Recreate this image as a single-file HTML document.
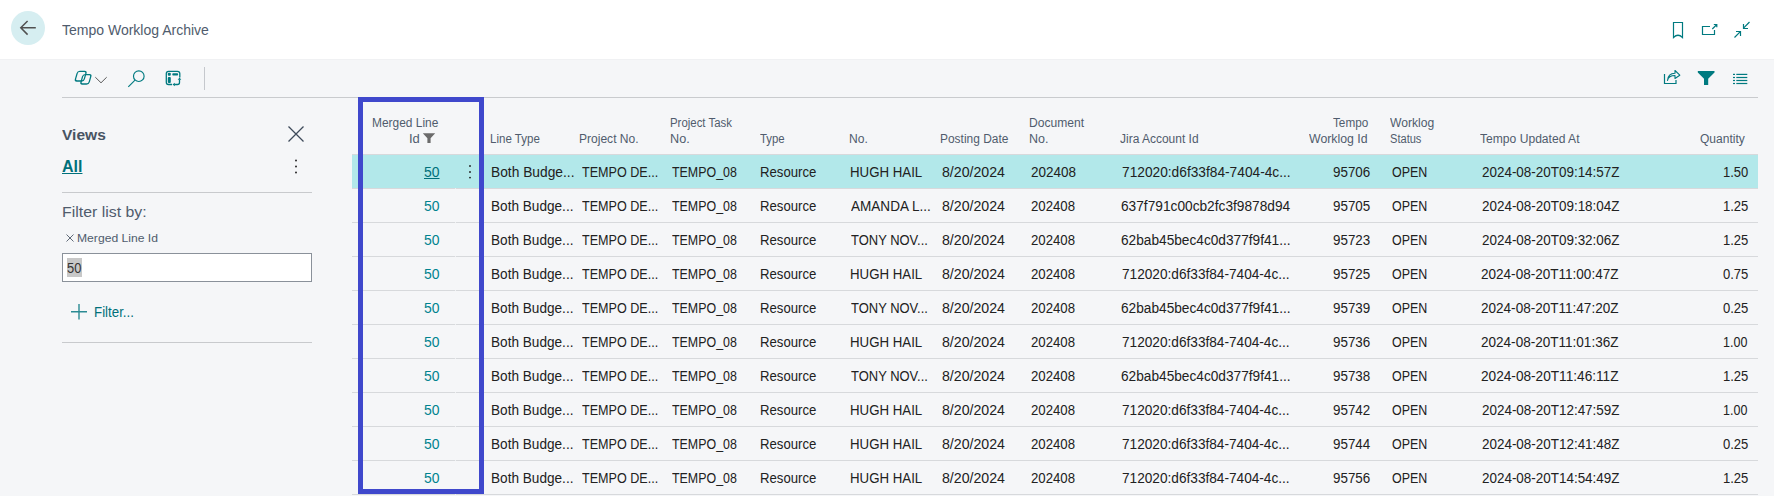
<!DOCTYPE html>
<html><head><meta charset="utf-8"><style>
*{box-sizing:border-box}
html,body{margin:0;padding:0}
body{width:1774px;height:496px;overflow:hidden;position:relative;background:#f5f6f8;font-family:"Liberation Sans",sans-serif}
.t{position:absolute;white-space:pre;transform-origin:0 0}
.hdr{position:absolute;left:0;top:0;width:1774px;height:59px;background:#fff;box-shadow:0 1px 1px rgba(0,0,0,0.02)}
.hl{position:absolute;left:352px;width:1406px;height:1px;background:#d7d9dc}
svg{position:absolute;overflow:visible}
</style></head><body>
<div class="hdr"></div>
<div style="position:absolute;left:11px;top:11px;width:34px;height:34px;border-radius:50%;background:#d6eef1"></div>
<svg style="left:0;top:0" width="60" height="60"><path d="M27.6 21 L20.8 27.8 L27.6 34.6 M21 27.8 H35.8" fill="none" stroke="#505050" stroke-width="1.5"/></svg>

<!-- header right icons -->
<svg style="left:0;top:0" width="1774" height="60">
 <path d="M1673.5 22.5 H1682.5 V37.5 Q1678 33 1673.5 37.5 Z" fill="none" stroke="#007a80" stroke-width="1.2" stroke-linejoin="miter"/>
 <path d="M1710 26.5 H1702.5 V34.5 H1714.5 V30" fill="none" stroke="#007a80" stroke-width="1.2"/>
 <path d="M1712.3 29 L1716.8 24.5 M1713.8 24.5 H1716.8 V27.3" fill="none" stroke="#007a80" stroke-width="1.2"/>
 <path d="M1749.5 22 L1743.8 27.8 M1743.5 24 V28.5 H1748" fill="none" stroke="#007a80" stroke-width="1.2"/>
 <path d="M1734.5 37.5 L1740.3 31.7 M1736 31.5 H1740.5 V36" fill="none" stroke="#007a80" stroke-width="1.2"/>
</svg>

<!-- toolbar -->
<svg style="left:0;top:0" width="1774" height="100">
 <g fill="none" stroke="#007a80" stroke-width="1.3">
  <rect x="-4.4" y="-4.8" width="8.8" height="9.6" rx="2" transform="translate(80.7,76.2) skewX(-16)"/>
  <rect x="-4.1" y="-4.7" width="8.2" height="9.4" rx="2" transform="translate(85.9,79.3) skewX(-16)"/>
 </g>
 <path d="M95.3 77.2 L101 82.8 L106.7 77.2" fill="none" stroke="#5a5a5a" stroke-width="1"/>
 <circle cx="138.8" cy="76.2" r="5.3" fill="none" stroke="#007a80" stroke-width="1.15"/>
 <path d="M135 80.2 L128.3 86.8" stroke="#007a80" stroke-width="1.15"/>
 <path d="M172 84.5 H168.5 Q166.3 84.5 166.3 82.3 V73.6 Q166.3 71.3 168.5 71.3 H177.5 Q179.8 71.3 179.8 73.6 V77.5" fill="none" stroke="#007a80" stroke-width="1.3"/>
 <rect x="167.8" y="72.8" width="3" height="3" rx="1" fill="#007a80"/>
 <rect x="172.3" y="73.2" width="5.8" height="2.4" rx="0.8" fill="#007a80"/>
 <rect x="167.8" y="77" width="3" height="6" rx="1" fill="#007a80"/>
 <path d="M179.5 79.5 V82.5 Q179.5 84.5 177.5 84.5 H174.5" fill="none" stroke="#007a80" stroke-width="1.3"/>
 <path d="M177.7 79.8 L179.5 77.5 L181.3 79.8 Z M174.8 82.7 L172.5 84.5 L174.8 86.3 Z" fill="#007a80"/>
 <rect x="204" y="67" width="1" height="23" fill="#c5c8cd"/>
 <!-- right toolbar -->
 <path d="M1664.5 74 V83.5 H1676 V80" fill="none" stroke="#007a80" stroke-width="1.2"/>
 <path d="M1667.5 80.5 Q1668.5 75.5 1675 75.5 V78.5 L1679.8 75.2 L1675 70.5 V73.3 Q1668 73.5 1667.5 80.5 Z" fill="none" stroke="#007a80" stroke-width="1.1" stroke-linejoin="round"/>
 <path d="M1697.8 71 H1714.5 V72.6 L1708.2 78.8 V85 H1704 V78.8 L1697.8 72.6 Z" fill="#007a80"/>
 <g fill="#007a80">
  <rect x="1733" y="73.8" width="2" height="1.2"/><rect x="1736.3" y="73.8" width="11" height="1.2"/>
  <rect x="1733" y="76.9" width="2" height="1.2"/><rect x="1736.3" y="76.9" width="11" height="1.2"/>
  <rect x="1733" y="79.9" width="2" height="1.2"/><rect x="1736.3" y="79.9" width="11" height="1.2"/>
  <rect x="1733" y="82.9" width="2" height="1.2"/><rect x="1736.3" y="82.9" width="11" height="1.2"/>
 </g>
</svg>
<div style="position:absolute;left:62px;top:97px;width:1696px;height:1px;background:#c9cbce"></div>

<!-- left panel -->
<svg style="left:0;top:0" width="350" height="350">
 <path d="M288.5 126.5 L303.5 141.5 M303.5 126.5 L288.5 141.5" stroke="#3e4a5a" stroke-width="1.3"/>
 <circle cx="296" cy="160.5" r="0.95" fill="#222"/><circle cx="296" cy="166.5" r="0.95" fill="#222"/><circle cx="296" cy="172.5" r="0.95" fill="#222"/>
 <path d="M66.5 234.5 L73.5 241.5 M73.5 234.5 L66.5 241.5" stroke="#606a78" stroke-width="1"/>
 <path d="M79 312 H87 M79 304 V320" transform="translate(0,0)" stroke="none"/>
 <path d="M71 311.8 H87 M79 304 V319.6" stroke="#2a8a93" stroke-width="1.4"/>
</svg>
<div style="position:absolute;left:62px;top:192px;width:250px;height:1px;background:#c8cacd"></div>
<div style="position:absolute;left:62px;top:253px;width:250px;height:29px;background:#fff;border:1px solid #8a919a"></div>
<div style="position:absolute;left:67px;top:258px;width:15px;height:19px;background:#c8c8c8"></div>
<div style="position:absolute;left:62px;top:342px;width:250px;height:1px;background:#c8cacd"></div>

<!-- table -->
<div style="position:absolute;left:352px;top:155px;width:1406px;height:33px;background:#b2e8ea"></div>
<div class="hl" style="top:154px"></div>
<div class="hl" style="top:188px"></div><div style="position:absolute;left:455px;top:188px;width:1px;height:1px;background:#eef0f2"></div><div class="hl" style="top:222px"></div><div style="position:absolute;left:455px;top:222px;width:1px;height:1px;background:#eef0f2"></div><div class="hl" style="top:256px"></div><div style="position:absolute;left:455px;top:256px;width:1px;height:1px;background:#eef0f2"></div><div class="hl" style="top:290px"></div><div style="position:absolute;left:455px;top:290px;width:1px;height:1px;background:#eef0f2"></div><div class="hl" style="top:324px"></div><div style="position:absolute;left:455px;top:324px;width:1px;height:1px;background:#eef0f2"></div><div class="hl" style="top:358px"></div><div style="position:absolute;left:455px;top:358px;width:1px;height:1px;background:#eef0f2"></div><div class="hl" style="top:392px"></div><div style="position:absolute;left:455px;top:392px;width:1px;height:1px;background:#eef0f2"></div><div class="hl" style="top:426px"></div><div style="position:absolute;left:455px;top:426px;width:1px;height:1px;background:#eef0f2"></div><div class="hl" style="top:460px"></div><div style="position:absolute;left:455px;top:460px;width:1px;height:1px;background:#eef0f2"></div><div class="hl" style="top:494px"></div><div style="position:absolute;left:455px;top:494px;width:1px;height:1px;background:#eef0f2"></div>
<svg style="left:0;top:0" width="500" height="200">
 <path d="M422.8 133.3 H435.2 L430.6 138.3 V143 H427.4 V138.3 Z" fill="#6b6b6b"/>
 <circle cx="470" cy="166" r="0.95" fill="#222"/><circle cx="470" cy="172" r="0.95" fill="#222"/><circle cx="470" cy="177.6" r="0.95" fill="#222"/>
</svg>
<span id="t0" class="t" style="left:61.82px;top:21.65px;font-size:14px;line-height:17px;color:#505c6d;transform:scaleX(1.0006);">Tempo Worklog Archive</span>
<span id="t1" class="t" style="left:62.00px;top:125.13px;font-size:15.5px;line-height:19px;color:#485463;transform:scaleX(1.0037);font-weight:700;">Views</span>
<span id="t2" class="t" style="left:62.00px;top:156.96px;font-size:16px;line-height:19px;color:#00707a;transform:scaleX(1.0000);font-weight:700;text-decoration:underline;text-underline-offset:1px;">All</span>
<span id="t3" class="t" style="left:61.98px;top:202.13px;font-size:15.5px;line-height:19px;color:#505c6d;transform:scaleX(1.0247);">Filter list by:</span>
<span id="t4" class="t" style="left:77.35px;top:231.02px;font-size:11.5px;line-height:14px;color:#505c6d;transform:scaleX(1.0556);">Merged Line Id</span>
<span id="t5" class="t" style="left:67.20px;top:260.05px;font-size:14px;line-height:17px;color:#333;transform:scaleX(0.9208);">50</span>
<span id="t6" class="t" style="left:94.49px;top:303.65px;font-size:14px;line-height:17px;color:#00707a;transform:scaleX(0.9514);">Filter...</span>
<span id="t7" class="t" style="left:371.69px;top:115.84px;font-size:12px;line-height:14px;color:#505c6d;transform:scaleX(0.9943);">Merged Line</span>
<span id="t8" class="t" style="left:408.53px;top:131.84px;font-size:12px;line-height:14px;color:#505c6d;transform:scaleX(1.0828);">Id</span>
<span id="t9" class="t" style="left:489.52px;top:131.84px;font-size:12px;line-height:14px;color:#505c6d;transform:scaleX(0.9608);">Line Type</span>
<span id="t10" class="t" style="left:579.49px;top:131.84px;font-size:12px;line-height:14px;color:#505c6d;transform:scaleX(1.0037);">Project No.</span>
<span id="t11" class="t" style="left:669.65px;top:115.84px;font-size:12px;line-height:14px;color:#505c6d;transform:scaleX(0.9513);">Project Task</span>
<span id="t12" class="t" style="left:669.61px;top:131.84px;font-size:12px;line-height:14px;color:#505c6d;transform:scaleX(1.0542);">No.</span>
<span id="t13" class="t" style="left:759.93px;top:131.84px;font-size:12px;line-height:14px;color:#505c6d;transform:scaleX(0.9483);">Type</span>
<span id="t14" class="t" style="left:849.41px;top:131.84px;font-size:12px;line-height:14px;color:#505c6d;transform:scaleX(1.0074);">No.</span>
<span id="t15" class="t" style="left:939.60px;top:131.84px;font-size:12px;line-height:14px;color:#505c6d;transform:scaleX(0.9946);">Posting Date</span>
<span id="t16" class="t" style="left:1029.42px;top:115.84px;font-size:12px;line-height:14px;color:#505c6d;transform:scaleX(1.0079);">Document</span>
<span id="t17" class="t" style="left:1029.29px;top:131.84px;font-size:12px;line-height:14px;color:#505c6d;transform:scaleX(1.0413);">No.</span>
<span id="t18" class="t" style="left:1120.11px;top:131.84px;font-size:12px;line-height:14px;color:#505c6d;transform:scaleX(0.9978);">Jira Account Id</span>
<span id="t19" class="t" style="left:1332.87px;top:115.84px;font-size:12px;line-height:14px;color:#505c6d;transform:scaleX(0.9785);">Tempo</span>
<span id="t20" class="t" style="left:1309.31px;top:131.84px;font-size:12px;line-height:14px;color:#505c6d;transform:scaleX(1.0251);">Worklog Id</span>
<span id="t21" class="t" style="left:1390.42px;top:115.84px;font-size:12px;line-height:14px;color:#505c6d;transform:scaleX(1.0100);">Worklog</span>
<span id="t22" class="t" style="left:1390.45px;top:131.84px;font-size:12px;line-height:14px;color:#505c6d;transform:scaleX(0.9234);">Status</span>
<span id="t23" class="t" style="left:1480.39px;top:131.84px;font-size:12px;line-height:14px;color:#505c6d;transform:scaleX(1.0083);">Tempo Updated At</span>
<span id="t24" class="t" style="left:1700.30px;top:131.84px;font-size:12px;line-height:14px;color:#505c6d;transform:scaleX(1.0011);">Quantity</span>
<span id="t25" class="t" style="left:424.43px;top:164.05px;font-size:14px;line-height:17px;color:#00707a;transform:scaleX(0.9971);text-decoration:underline;text-underline-offset:1px;">50</span>
<span id="t26" class="t" style="left:491.16px;top:164.05px;font-size:14px;line-height:17px;color:#212121;transform:scaleX(0.9838);">Both Budge...</span>
<span id="t27" class="t" style="left:581.68px;top:164.05px;font-size:14px;line-height:17px;color:#212121;transform:scaleX(0.8980);">TEMPO DE...</span>
<span id="t28" class="t" style="left:672.00px;top:164.05px;font-size:14px;line-height:17px;color:#212121;transform:scaleX(0.8869);">TEMPO_08</span>
<span id="t29" class="t" style="left:760.33px;top:164.05px;font-size:14px;line-height:17px;color:#212121;transform:scaleX(0.9404);">Resource</span>
<span id="t30" class="t" style="left:850.41px;top:164.05px;font-size:14px;line-height:17px;color:#212121;transform:scaleX(0.9475);">HUGH HAIL</span>
<span id="t31" class="t" style="left:941.73px;top:164.05px;font-size:14px;line-height:17px;color:#212121;transform:scaleX(1.0114);">8/20/2024</span>
<span id="t32" class="t" style="left:1031.30px;top:164.05px;font-size:14px;line-height:17px;color:#212121;transform:scaleX(0.9636);">202408</span>
<span id="t33" class="t" style="left:1122.19px;top:164.05px;font-size:14px;line-height:17px;color:#212121;transform:scaleX(0.9804);">712020:d6f33f84-7404-4c...</span>
<span id="t34" class="t" style="left:1333.21px;top:164.05px;font-size:14px;line-height:17px;color:#212121;transform:scaleX(0.9558);">95706</span>
<span id="t35" class="t" style="left:1391.68px;top:164.05px;font-size:14px;line-height:17px;color:#212121;transform:scaleX(0.8897);">OPEN</span>
<span id="t36" class="t" style="left:1481.50px;top:164.05px;font-size:14px;line-height:17px;color:#212121;transform:scaleX(0.9599);">2024-08-20T09:14:57Z</span>
<span id="t37" class="t" style="left:1723.10px;top:164.05px;font-size:14px;line-height:17px;color:#212121;transform:scaleX(0.9292);">1.50</span>
<span id="t38" class="t" style="left:424.34px;top:198.05px;font-size:14px;line-height:17px;color:#00838f;transform:scaleX(0.9971);">50</span>
<span id="t39" class="t" style="left:491.18px;top:198.05px;font-size:14px;line-height:17px;color:#212121;transform:scaleX(0.9718);">Both Budge...</span>
<span id="t40" class="t" style="left:581.67px;top:198.05px;font-size:14px;line-height:17px;color:#212121;transform:scaleX(0.8980);">TEMPO DE...</span>
<span id="t41" class="t" style="left:672.00px;top:198.05px;font-size:14px;line-height:17px;color:#212121;transform:scaleX(0.8869);">TEMPO_08</span>
<span id="t42" class="t" style="left:760.31px;top:198.05px;font-size:14px;line-height:17px;color:#212121;transform:scaleX(0.9404);">Resource</span>
<span id="t43" class="t" style="left:851.39px;top:198.05px;font-size:14px;line-height:17px;color:#212121;transform:scaleX(0.9673);">AMANDA L...</span>
<span id="t44" class="t" style="left:941.72px;top:198.05px;font-size:14px;line-height:17px;color:#212121;transform:scaleX(1.0114);">8/20/2024</span>
<span id="t45" class="t" style="left:1031.29px;top:198.05px;font-size:14px;line-height:17px;color:#212121;transform:scaleX(0.9422);">202408</span>
<span id="t46" class="t" style="left:1121.48px;top:198.05px;font-size:14px;line-height:17px;color:#212121;transform:scaleX(0.9790);">637f791c00cb2fc3f9878d94</span>
<span id="t47" class="t" style="left:1333.18px;top:198.05px;font-size:14px;line-height:17px;color:#212121;transform:scaleX(0.9558);">95705</span>
<span id="t48" class="t" style="left:1391.68px;top:198.05px;font-size:14px;line-height:17px;color:#212121;transform:scaleX(0.8897);">OPEN</span>
<span id="t49" class="t" style="left:1481.50px;top:198.05px;font-size:14px;line-height:17px;color:#212121;transform:scaleX(0.9599);">2024-08-20T09:18:04Z</span>
<span id="t50" class="t" style="left:1723.10px;top:198.05px;font-size:14px;line-height:17px;color:#212121;transform:scaleX(0.9307);">1.25</span>
<span id="t51" class="t" style="left:424.34px;top:232.05px;font-size:14px;line-height:17px;color:#00838f;transform:scaleX(0.9971);">50</span>
<span id="t52" class="t" style="left:491.18px;top:232.05px;font-size:14px;line-height:17px;color:#212121;transform:scaleX(0.9718);">Both Budge...</span>
<span id="t53" class="t" style="left:581.67px;top:232.05px;font-size:14px;line-height:17px;color:#212121;transform:scaleX(0.8980);">TEMPO DE...</span>
<span id="t54" class="t" style="left:672.00px;top:232.05px;font-size:14px;line-height:17px;color:#212121;transform:scaleX(0.8869);">TEMPO_08</span>
<span id="t55" class="t" style="left:760.31px;top:232.05px;font-size:14px;line-height:17px;color:#212121;transform:scaleX(0.9404);">Resource</span>
<span id="t56" class="t" style="left:851.41px;top:232.05px;font-size:14px;line-height:17px;color:#212121;transform:scaleX(0.9260);">TONY NOV...</span>
<span id="t57" class="t" style="left:941.72px;top:232.05px;font-size:14px;line-height:17px;color:#212121;transform:scaleX(1.0114);">8/20/2024</span>
<span id="t58" class="t" style="left:1031.29px;top:232.05px;font-size:14px;line-height:17px;color:#212121;transform:scaleX(0.9422);">202408</span>
<span id="t59" class="t" style="left:1121.49px;top:232.05px;font-size:14px;line-height:17px;color:#212121;transform:scaleX(0.9767);">62bab45bec4c0d377f9f41...</span>
<span id="t60" class="t" style="left:1333.21px;top:232.05px;font-size:14px;line-height:17px;color:#212121;transform:scaleX(0.9558);">95723</span>
<span id="t61" class="t" style="left:1391.68px;top:232.05px;font-size:14px;line-height:17px;color:#212121;transform:scaleX(0.8897);">OPEN</span>
<span id="t62" class="t" style="left:1481.50px;top:232.05px;font-size:14px;line-height:17px;color:#212121;transform:scaleX(0.9599);">2024-08-20T09:32:06Z</span>
<span id="t63" class="t" style="left:1723.10px;top:232.05px;font-size:14px;line-height:17px;color:#212121;transform:scaleX(0.9307);">1.25</span>
<span id="t64" class="t" style="left:424.34px;top:266.05px;font-size:14px;line-height:17px;color:#00838f;transform:scaleX(0.9971);">50</span>
<span id="t65" class="t" style="left:491.18px;top:266.05px;font-size:14px;line-height:17px;color:#212121;transform:scaleX(0.9718);">Both Budge...</span>
<span id="t66" class="t" style="left:581.67px;top:266.05px;font-size:14px;line-height:17px;color:#212121;transform:scaleX(0.8980);">TEMPO DE...</span>
<span id="t67" class="t" style="left:672.00px;top:266.05px;font-size:14px;line-height:17px;color:#212121;transform:scaleX(0.8869);">TEMPO_08</span>
<span id="t68" class="t" style="left:760.31px;top:266.05px;font-size:14px;line-height:17px;color:#212121;transform:scaleX(0.9404);">Resource</span>
<span id="t69" class="t" style="left:850.40px;top:266.05px;font-size:14px;line-height:17px;color:#212121;transform:scaleX(0.9475);">HUGH HAIL</span>
<span id="t70" class="t" style="left:941.72px;top:266.05px;font-size:14px;line-height:17px;color:#212121;transform:scaleX(1.0114);">8/20/2024</span>
<span id="t71" class="t" style="left:1031.29px;top:266.05px;font-size:14px;line-height:17px;color:#212121;transform:scaleX(0.9422);">202408</span>
<span id="t72" class="t" style="left:1122.19px;top:266.05px;font-size:14px;line-height:17px;color:#212121;transform:scaleX(0.9746);">712020:d6f33f84-7404-4c...</span>
<span id="t73" class="t" style="left:1333.18px;top:266.05px;font-size:14px;line-height:17px;color:#212121;transform:scaleX(0.9558);">95725</span>
<span id="t74" class="t" style="left:1391.68px;top:266.05px;font-size:14px;line-height:17px;color:#212121;transform:scaleX(0.8897);">OPEN</span>
<span id="t75" class="t" style="left:1481.49px;top:266.05px;font-size:14px;line-height:17px;color:#212121;transform:scaleX(0.9670);">2024-08-20T11:00:47Z</span>
<span id="t76" class="t" style="left:1723.10px;top:266.05px;font-size:14px;line-height:17px;color:#212121;transform:scaleX(0.9307);">0.75</span>
<span id="t77" class="t" style="left:424.34px;top:300.05px;font-size:14px;line-height:17px;color:#00838f;transform:scaleX(0.9971);">50</span>
<span id="t78" class="t" style="left:491.18px;top:300.05px;font-size:14px;line-height:17px;color:#212121;transform:scaleX(0.9718);">Both Budge...</span>
<span id="t79" class="t" style="left:581.67px;top:300.05px;font-size:14px;line-height:17px;color:#212121;transform:scaleX(0.8980);">TEMPO DE...</span>
<span id="t80" class="t" style="left:672.00px;top:300.05px;font-size:14px;line-height:17px;color:#212121;transform:scaleX(0.8869);">TEMPO_08</span>
<span id="t81" class="t" style="left:760.31px;top:300.05px;font-size:14px;line-height:17px;color:#212121;transform:scaleX(0.9404);">Resource</span>
<span id="t82" class="t" style="left:851.41px;top:300.05px;font-size:14px;line-height:17px;color:#212121;transform:scaleX(0.9260);">TONY NOV...</span>
<span id="t83" class="t" style="left:941.72px;top:300.05px;font-size:14px;line-height:17px;color:#212121;transform:scaleX(1.0114);">8/20/2024</span>
<span id="t84" class="t" style="left:1031.29px;top:300.05px;font-size:14px;line-height:17px;color:#212121;transform:scaleX(0.9422);">202408</span>
<span id="t85" class="t" style="left:1121.49px;top:300.05px;font-size:14px;line-height:17px;color:#212121;transform:scaleX(0.9767);">62bab45bec4c0d377f9f41...</span>
<span id="t86" class="t" style="left:1333.21px;top:300.05px;font-size:14px;line-height:17px;color:#212121;transform:scaleX(0.9558);">95739</span>
<span id="t87" class="t" style="left:1391.68px;top:300.05px;font-size:14px;line-height:17px;color:#212121;transform:scaleX(0.8897);">OPEN</span>
<span id="t88" class="t" style="left:1481.49px;top:300.05px;font-size:14px;line-height:17px;color:#212121;transform:scaleX(0.9670);">2024-08-20T11:47:20Z</span>
<span id="t89" class="t" style="left:1723.10px;top:300.05px;font-size:14px;line-height:17px;color:#212121;transform:scaleX(0.9307);">0.25</span>
<span id="t90" class="t" style="left:424.34px;top:334.05px;font-size:14px;line-height:17px;color:#00838f;transform:scaleX(0.9971);">50</span>
<span id="t91" class="t" style="left:491.18px;top:334.05px;font-size:14px;line-height:17px;color:#212121;transform:scaleX(0.9718);">Both Budge...</span>
<span id="t92" class="t" style="left:581.67px;top:334.05px;font-size:14px;line-height:17px;color:#212121;transform:scaleX(0.8980);">TEMPO DE...</span>
<span id="t93" class="t" style="left:672.00px;top:334.05px;font-size:14px;line-height:17px;color:#212121;transform:scaleX(0.8869);">TEMPO_08</span>
<span id="t94" class="t" style="left:760.31px;top:334.05px;font-size:14px;line-height:17px;color:#212121;transform:scaleX(0.9404);">Resource</span>
<span id="t95" class="t" style="left:850.40px;top:334.05px;font-size:14px;line-height:17px;color:#212121;transform:scaleX(0.9475);">HUGH HAIL</span>
<span id="t96" class="t" style="left:941.72px;top:334.05px;font-size:14px;line-height:17px;color:#212121;transform:scaleX(1.0114);">8/20/2024</span>
<span id="t97" class="t" style="left:1031.29px;top:334.05px;font-size:14px;line-height:17px;color:#212121;transform:scaleX(0.9422);">202408</span>
<span id="t98" class="t" style="left:1122.19px;top:334.05px;font-size:14px;line-height:17px;color:#212121;transform:scaleX(0.9746);">712020:d6f33f84-7404-4c...</span>
<span id="t99" class="t" style="left:1333.20px;top:334.05px;font-size:14px;line-height:17px;color:#212121;transform:scaleX(0.9558);">95736</span>
<span id="t100" class="t" style="left:1391.68px;top:334.05px;font-size:14px;line-height:17px;color:#212121;transform:scaleX(0.8897);">OPEN</span>
<span id="t101" class="t" style="left:1481.49px;top:334.05px;font-size:14px;line-height:17px;color:#212121;transform:scaleX(0.9670);">2024-08-20T11:01:36Z</span>
<span id="t102" class="t" style="left:1723.08px;top:334.05px;font-size:14px;line-height:17px;color:#212121;transform:scaleX(0.8935);">1.00</span>
<span id="t103" class="t" style="left:424.34px;top:368.05px;font-size:14px;line-height:17px;color:#00838f;transform:scaleX(0.9971);">50</span>
<span id="t104" class="t" style="left:491.18px;top:368.05px;font-size:14px;line-height:17px;color:#212121;transform:scaleX(0.9718);">Both Budge...</span>
<span id="t105" class="t" style="left:581.67px;top:368.05px;font-size:14px;line-height:17px;color:#212121;transform:scaleX(0.8980);">TEMPO DE...</span>
<span id="t106" class="t" style="left:672.00px;top:368.05px;font-size:14px;line-height:17px;color:#212121;transform:scaleX(0.8869);">TEMPO_08</span>
<span id="t107" class="t" style="left:760.31px;top:368.05px;font-size:14px;line-height:17px;color:#212121;transform:scaleX(0.9404);">Resource</span>
<span id="t108" class="t" style="left:851.41px;top:368.05px;font-size:14px;line-height:17px;color:#212121;transform:scaleX(0.9260);">TONY NOV...</span>
<span id="t109" class="t" style="left:941.72px;top:368.05px;font-size:14px;line-height:17px;color:#212121;transform:scaleX(1.0114);">8/20/2024</span>
<span id="t110" class="t" style="left:1031.29px;top:368.05px;font-size:14px;line-height:17px;color:#212121;transform:scaleX(0.9422);">202408</span>
<span id="t111" class="t" style="left:1121.49px;top:368.05px;font-size:14px;line-height:17px;color:#212121;transform:scaleX(0.9767);">62bab45bec4c0d377f9f41...</span>
<span id="t112" class="t" style="left:1333.21px;top:368.05px;font-size:14px;line-height:17px;color:#212121;transform:scaleX(0.9558);">95738</span>
<span id="t113" class="t" style="left:1391.68px;top:368.05px;font-size:14px;line-height:17px;color:#212121;transform:scaleX(0.8897);">OPEN</span>
<span id="t114" class="t" style="left:1481.49px;top:368.05px;font-size:14px;line-height:17px;color:#212121;transform:scaleX(0.9742);">2024-08-20T11:46:11Z</span>
<span id="t115" class="t" style="left:1723.10px;top:368.05px;font-size:14px;line-height:17px;color:#212121;transform:scaleX(0.9307);">1.25</span>
<span id="t116" class="t" style="left:424.34px;top:402.05px;font-size:14px;line-height:17px;color:#00838f;transform:scaleX(0.9971);">50</span>
<span id="t117" class="t" style="left:491.18px;top:402.05px;font-size:14px;line-height:17px;color:#212121;transform:scaleX(0.9718);">Both Budge...</span>
<span id="t118" class="t" style="left:581.67px;top:402.05px;font-size:14px;line-height:17px;color:#212121;transform:scaleX(0.8980);">TEMPO DE...</span>
<span id="t119" class="t" style="left:672.00px;top:402.05px;font-size:14px;line-height:17px;color:#212121;transform:scaleX(0.8869);">TEMPO_08</span>
<span id="t120" class="t" style="left:760.31px;top:402.05px;font-size:14px;line-height:17px;color:#212121;transform:scaleX(0.9404);">Resource</span>
<span id="t121" class="t" style="left:850.40px;top:402.05px;font-size:14px;line-height:17px;color:#212121;transform:scaleX(0.9475);">HUGH HAIL</span>
<span id="t122" class="t" style="left:941.72px;top:402.05px;font-size:14px;line-height:17px;color:#212121;transform:scaleX(1.0114);">8/20/2024</span>
<span id="t123" class="t" style="left:1031.29px;top:402.05px;font-size:14px;line-height:17px;color:#212121;transform:scaleX(0.9422);">202408</span>
<span id="t124" class="t" style="left:1122.19px;top:402.05px;font-size:14px;line-height:17px;color:#212121;transform:scaleX(0.9746);">712020:d6f33f84-7404-4c...</span>
<span id="t125" class="t" style="left:1333.21px;top:402.05px;font-size:14px;line-height:17px;color:#212121;transform:scaleX(0.9558);">95742</span>
<span id="t126" class="t" style="left:1391.68px;top:402.05px;font-size:14px;line-height:17px;color:#212121;transform:scaleX(0.8897);">OPEN</span>
<span id="t127" class="t" style="left:1481.50px;top:402.05px;font-size:14px;line-height:17px;color:#212121;transform:scaleX(0.9599);">2024-08-20T12:47:59Z</span>
<span id="t128" class="t" style="left:1723.08px;top:402.05px;font-size:14px;line-height:17px;color:#212121;transform:scaleX(0.8935);">1.00</span>
<span id="t129" class="t" style="left:424.34px;top:436.05px;font-size:14px;line-height:17px;color:#00838f;transform:scaleX(0.9971);">50</span>
<span id="t130" class="t" style="left:491.18px;top:436.05px;font-size:14px;line-height:17px;color:#212121;transform:scaleX(0.9718);">Both Budge...</span>
<span id="t131" class="t" style="left:581.67px;top:436.05px;font-size:14px;line-height:17px;color:#212121;transform:scaleX(0.8980);">TEMPO DE...</span>
<span id="t132" class="t" style="left:672.00px;top:436.05px;font-size:14px;line-height:17px;color:#212121;transform:scaleX(0.8869);">TEMPO_08</span>
<span id="t133" class="t" style="left:760.31px;top:436.05px;font-size:14px;line-height:17px;color:#212121;transform:scaleX(0.9404);">Resource</span>
<span id="t134" class="t" style="left:850.40px;top:436.05px;font-size:14px;line-height:17px;color:#212121;transform:scaleX(0.9475);">HUGH HAIL</span>
<span id="t135" class="t" style="left:941.72px;top:436.05px;font-size:14px;line-height:17px;color:#212121;transform:scaleX(1.0114);">8/20/2024</span>
<span id="t136" class="t" style="left:1031.29px;top:436.05px;font-size:14px;line-height:17px;color:#212121;transform:scaleX(0.9422);">202408</span>
<span id="t137" class="t" style="left:1122.19px;top:436.05px;font-size:14px;line-height:17px;color:#212121;transform:scaleX(0.9746);">712020:d6f33f84-7404-4c...</span>
<span id="t138" class="t" style="left:1333.18px;top:436.05px;font-size:14px;line-height:17px;color:#212121;transform:scaleX(0.9558);">95744</span>
<span id="t139" class="t" style="left:1391.68px;top:436.05px;font-size:14px;line-height:17px;color:#212121;transform:scaleX(0.8897);">OPEN</span>
<span id="t140" class="t" style="left:1481.50px;top:436.05px;font-size:14px;line-height:17px;color:#212121;transform:scaleX(0.9599);">2024-08-20T12:41:48Z</span>
<span id="t141" class="t" style="left:1723.10px;top:436.05px;font-size:14px;line-height:17px;color:#212121;transform:scaleX(0.9307);">0.25</span>
<span id="t142" class="t" style="left:424.34px;top:470.05px;font-size:14px;line-height:17px;color:#00838f;transform:scaleX(0.9971);">50</span>
<span id="t143" class="t" style="left:491.18px;top:470.05px;font-size:14px;line-height:17px;color:#212121;transform:scaleX(0.9718);">Both Budge...</span>
<span id="t144" class="t" style="left:581.67px;top:470.05px;font-size:14px;line-height:17px;color:#212121;transform:scaleX(0.8980);">TEMPO DE...</span>
<span id="t145" class="t" style="left:672.00px;top:470.05px;font-size:14px;line-height:17px;color:#212121;transform:scaleX(0.8869);">TEMPO_08</span>
<span id="t146" class="t" style="left:760.31px;top:470.05px;font-size:14px;line-height:17px;color:#212121;transform:scaleX(0.9404);">Resource</span>
<span id="t147" class="t" style="left:850.40px;top:470.05px;font-size:14px;line-height:17px;color:#212121;transform:scaleX(0.9475);">HUGH HAIL</span>
<span id="t148" class="t" style="left:941.72px;top:470.05px;font-size:14px;line-height:17px;color:#212121;transform:scaleX(1.0114);">8/20/2024</span>
<span id="t149" class="t" style="left:1031.29px;top:470.05px;font-size:14px;line-height:17px;color:#212121;transform:scaleX(0.9422);">202408</span>
<span id="t150" class="t" style="left:1122.19px;top:470.05px;font-size:14px;line-height:17px;color:#212121;transform:scaleX(0.9746);">712020:d6f33f84-7404-4c...</span>
<span id="t151" class="t" style="left:1333.20px;top:470.05px;font-size:14px;line-height:17px;color:#212121;transform:scaleX(0.9558);">95756</span>
<span id="t152" class="t" style="left:1391.68px;top:470.05px;font-size:14px;line-height:17px;color:#212121;transform:scaleX(0.8897);">OPEN</span>
<span id="t153" class="t" style="left:1481.50px;top:470.05px;font-size:14px;line-height:17px;color:#212121;transform:scaleX(0.9599);">2024-08-20T14:54:49Z</span>
<span id="t154" class="t" style="left:1723.10px;top:470.05px;font-size:14px;line-height:17px;color:#212121;transform:scaleX(0.9307);">1.25</span>
<div style="position:absolute;left:358px;top:97px;width:126px;height:397px;border:5px solid #3f48cc"></div>
</body></html>
